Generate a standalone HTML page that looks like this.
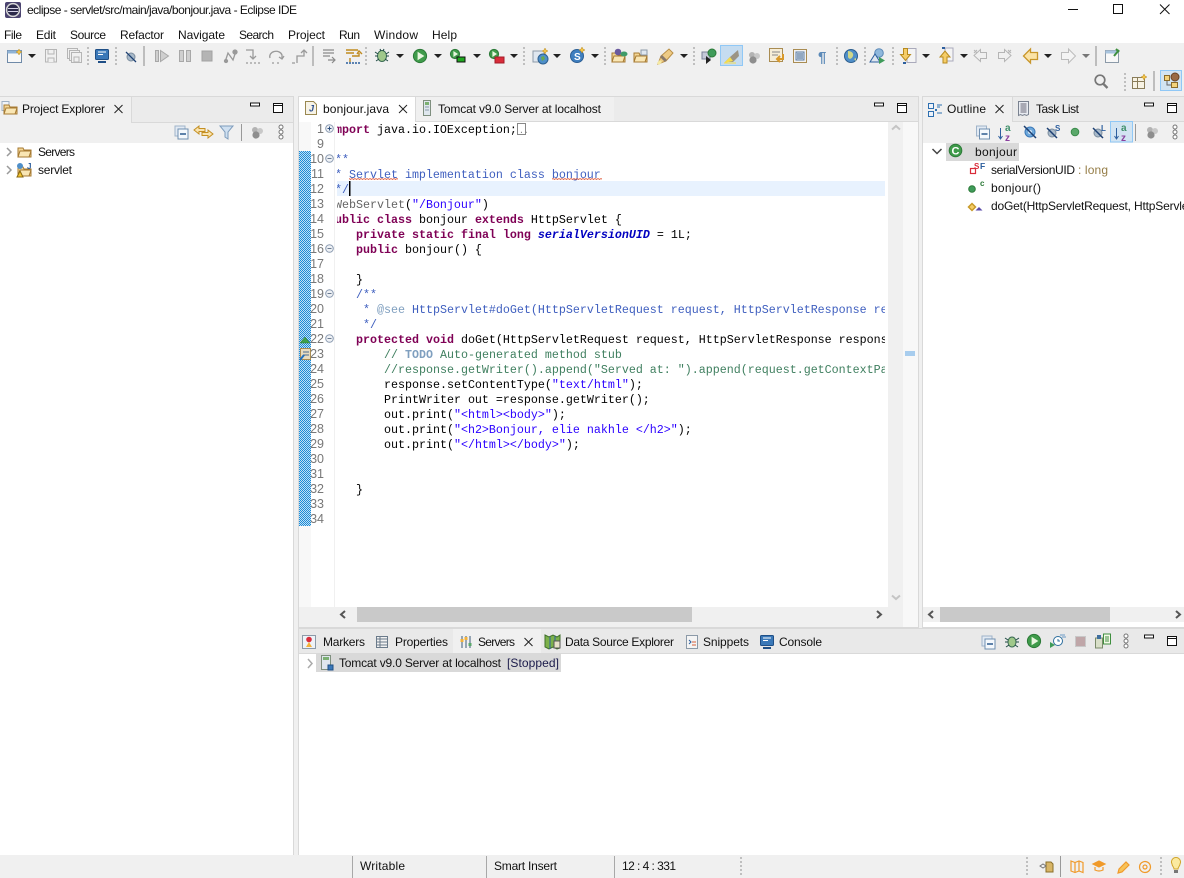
<!DOCTYPE html>
<html><head><meta charset="utf-8"><title>eclipse - servlet/src/main/java/bonjour.java - Eclipse IDE</title>
<style>
html,body{margin:0;padding:0;background:#fff;width:1184px;height:878px;overflow:hidden}
svg{display:block;position:absolute;left:0;top:0}
text{font-family:"Liberation Sans",sans-serif;font-size:12px;fill:#111;white-space:pre}
.c text,text.c{font-family:"Liberation Mono",monospace;font-size:11.67px;fill:#000}
.n{font-family:"Liberation Sans",sans-serif;font-size:12.5px;fill:#787878;text-anchor:end}
.k{fill:#7f0055;font-weight:bold}.j{fill:#3f5fbf}.s{fill:#2a00ff}.g{fill:#3f7f5f}.a{fill:#646464}.f{fill:#0000c0;font-weight:bold;font-style:italic}.t{fill:#7f9fbf;font-weight:bold}.d{fill:#7f9fbf}
</style></head><body>
<svg width="1184" height="878" viewBox="0 0 1184 878" xmlns="http://www.w3.org/2000/svg">
<defs>
<pattern id="dith" width="2" height="2" patternUnits="userSpaceOnUse"><rect width="2" height="2" fill="#bfe0f5"/><rect width="1" height="1" fill="#1b8ad6"/><rect x="1" y="1" width="1" height="1" fill="#1b8ad6"/></pattern>
<pattern id="wave" x="349" y="178" width="3" height="2" patternUnits="userSpaceOnUse"><path d="M0 .5L1.500 1.500 3 .5" stroke="#e05a3c" fill="none" stroke-width=".9"/></pattern>
<clipPath id="cc"><rect x="337" y="121" width="548" height="486"/></clipPath>
<clipPath id="oc"><rect x="923" y="143" width="261" height="464"/></clipPath>
<g id="dd"><path d="M-4-2H4L0 2Z" fill="#222"/></g>
<g id="ddg"><path d="M-4-2H4L0 2Z" fill="#777"/></g>
<g id="grip"><path d="M0-9V9" stroke="#aaa" stroke-width="1.4" stroke-dasharray="2 2"/></g>
<g id="sep"><path d="M0-10V10" stroke="#8a8a8a"/></g>
<g id="min"><rect x="-4.500" y="-2" width="9" height="3" fill="#fff" stroke="#111"/></g>
<g id="max"><path d="M-4.500-4.500h9v9h-9zM-4.500-2.500h9" fill="#fff" stroke="#111"/></g>
<g id="x"><path d="M-4-4L4 4M4-4L-4 4" stroke="#222" stroke-width="1" fill="none"/></g>
<g id="coll"><rect x="-6.500" y="-6.500" width="10" height="10" fill="#e2eaf3" stroke="#9fb3c9"/><rect x="-3.500" y="-3.500" width="10" height="10" fill="#f4f8fc" stroke="#6f8fb0"/><path d="M-1.500 1.500h6" stroke="#1e4e86" stroke-width="1.4"/></g>
<g id="gears"><circle cx="-2" cy="-2" r="3" fill="#b3b3b3"/><circle cx="3" cy="-1" r="3" fill="#c8c8c8"/><circle cx="-1" cy="3" r="3.600" fill="#8e8e8e"/></g>
<g id="menu"><circle cx="0" cy="-5" r="2" fill="#fff" stroke="#777"/><circle cx="0" cy="0" r="2" fill="#fff" stroke="#777"/><circle cx="0" cy="5" r="2" fill="#fff" stroke="#777"/></g>
<g id="folder"><path d="M-7-4h5l1 2h7v7h-13z" fill="#f4d796" stroke="#a67a32"/><path d="M-7 5l2-6h11l-2 6z" fill="#f9e6b4" stroke="#a67a32"/></g>
<g id="play"><circle r="6.600" fill="#3f9b4a" stroke="#2c7a38"/><path d="M-2.400-4.200L4.400 0-2.400 4.200Z" fill="#e8f6df"/></g>
<g id="playS"><circle r="4.600" fill="#3f9b4a" stroke="#2c7a38"/><path d="M-1.600-3L3 0-1.600 3Z" fill="#e8f6df"/></g>
</defs>

<!-- backgrounds -->
<rect y="43" width="1184" height="53" fill="#f0f0f0"/>
<rect y="855" width="1184" height="23" fill="#f0f0f0"/>
<rect y="854" width="1184" height="1" fill="#dcdcdc"/>
<rect y="96" width="1184" height="759" fill="#f0f0f0"/>

<!-- left panel -->
<rect x="0" y="96" width="294" height="759" fill="#fff"/>
<rect x="0" y="96" width="294" height="47" fill="#f0f0f0"/>
<rect x="131" y="97" width="162" height="25" fill="#ebebeb"/>
<path d="M0 96.500H293.500V855M131.500 97V122M131 122.500H293" stroke="#d9d9d9" fill="none"/>

<!-- editor panel -->
<rect x="298" y="96" width="621" height="532" fill="#f0f0f0"/>
<rect x="299" y="97" width="620" height="24" fill="#ebebeb"/>
<rect x="299" y="97" width="116" height="25" fill="#fff"/>
<rect x="415" y="97" width="199" height="24" fill="#f0f0f0"/>
<path d="M298.500 97V627.500H918.500V97M298 96.500H919M415.500 97V121M415 121.500H918" stroke="#d9d9d9" fill="none"/>
<rect x="299" y="122" width="589" height="485" fill="#fff"/>
<rect x="299" y="122" width="12" height="485" fill="#f8f8f8"/>
<path d="M334.500 122V607" stroke="#f0f0f0"/>
<rect x="299" y="151" width="12" height="375" fill="url(#dith)"/>
<rect x="337" y="181" width="548" height="15" fill="#e8f2fe"/>
<rect x="888" y="122" width="15" height="485" fill="#f0f0f0"/>
<rect x="903" y="122" width="15" height="505" fill="#f8f8f8"/>
<rect x="905" y="351" width="10" height="5" fill="#a8cdee"/>
<path d="M892 129.500l4-3.500 4 3.500" stroke="#c4c4c4" stroke-width="2" fill="none"/>
<path d="M892 595.500l4 3.500 4-3.500" stroke="#c4c4c4" stroke-width="2" fill="none"/>
<rect x="335" y="607" width="568" height="15" fill="#f0f0f0"/>
<rect x="357" y="607" width="335" height="15" fill="#c9c9c9"/>
<path d="M345 611l-4 3.500 4 3.500M877 611l4 3.500-4 3.500" stroke="#555" stroke-width="2" fill="none"/>

<!-- outline panel -->
<rect x="922" y="96" width="262" height="531" fill="#fff"/>
<rect x="922" y="96" width="262" height="47" fill="#f0f0f0"/>
<rect x="1013" y="97" width="171" height="24" fill="#ebebeb"/>
<path d="M922.500 627.500V96.500H1184M1012.500 97V121M1012 121.500H1184M922 627.500H1184" stroke="#d9d9d9" fill="none"/>
<rect x="923" y="607" width="261" height="15" fill="#f0f0f0"/>
<rect x="940" y="607" width="170" height="15" fill="#c9c9c9"/>
<path d="M933 611l-4 3.500 4 3.500M1176 611l4 3.500-4 3.500" stroke="#555" stroke-width="2" fill="none"/>

<!-- bottom panel -->
<rect x="298" y="628" width="886" height="227" fill="#fff"/>
<rect x="299" y="629" width="885" height="25" fill="#e9e9e9"/>
<rect x="453" y="629" width="88" height="25" fill="#f0f0f0"/>
<path d="M298.500 855V628.500H1184M299 653.500H1184" stroke="#d9d9d9" fill="none"/>
<rect x="316" y="654" width="245" height="18" fill="#d9d9d9"/>

<!-- title bar -->
<rect x="5" y="2" width="16" height="16" rx="2" fill="#4b4470"/>
<circle cx="13" cy="10" r="6.400" fill="#2c2a4a" stroke="#d8d8d8" stroke-width="1.500"/>
<path d="M8 8.500h10M8 11.500h10" stroke="#d6d3e8" stroke-width="1"/>
<text x="27" y="14" textLength="270" lengthAdjust="spacing">eclipse - servlet/src/main/java/bonjour.java - Eclipse IDE</text>
<path d="M1068 9.500H1078" stroke="#111"/>
<rect x="1113.500" y="4.500" width="9" height="9" fill="none" stroke="#111"/>
<path d="M1160 4.500l9.500 9.500M1169.500 4.500l-9.500 9.500" stroke="#111" fill="none"/>

<!-- menu -->
<text x="4" y="39" textLength="18">File</text>
<text x="36" y="39" textLength="20">Edit</text>
<text x="70" y="39" textLength="36">Source</text>
<text x="120" y="39" textLength="44">Refactor</text>
<text x="178" y="39" textLength="47">Navigate</text>
<text x="239" y="39" textLength="35">Search</text>
<text x="288" y="39" textLength="37">Project</text>
<text x="339" y="39" textLength="21">Run</text>
<text x="374" y="39" textLength="44">Window</text>
<text x="432" y="39" textLength="25">Help</text>

<!-- toolbar -->
<g>
<g transform="translate(15,57)"><rect x="-7.500" y="-6.500" width="14" height="12" fill="#f8f8f8" stroke="#6f8aa8"/><rect x="-7.500" y="-6.500" width="14" height="3" fill="#8fb3d6"/><path d="M4-8l1 2 2 1-2 1-1 2-1-2-2-1 2-1z" fill="#f3c34a" stroke="#b78a1e" stroke-width=".5"/></g>
<use href="#dd" x="32" y="56"/>
<g fill="#f0f0f0" stroke="#b5b5b5"><path d="M45.500 49.500h11v12.500h-11z"/><path d="M48 50v4h6v-4M48 62v-4h6v4"/>
<path d="M67.500 48.500h10v10h-10z"/><path d="M69.500 50.500h10v10h-10z"/><path d="M71.500 52.500h10v10h-10z"/><path d="M74 57h5v5h-5z"/></g>
<use href="#grip" x="88" y="56"/>
<g transform="translate(102,56)"><rect x="-6.500" y="-6.500" width="13" height="10" rx="1" fill="#3a78b8" stroke="#1f4f86"/><path d="M-4-4h8M-4-1.500h5" stroke="#fff"/><path d="M-4 6h8" stroke="#1f4f86" stroke-width="2"/></g>
<use href="#grip" x="116" y="56"/>
<g transform="translate(131,57)"><circle r="4" fill="#a8b9c9" stroke="#7c8d9e"/><path d="M-5-5L5 5" stroke="#1c3f72" stroke-width="1.300"/></g>
<use href="#sep" x="144" y="56"/>
<g fill="#cfcfcf" stroke="#a8a8a8"><path d="M155.500 50.500h3v11h-3z"/><path d="M160.500 50.500l8 5.500-8 5.500z"/><path d="M179.500 50.500h4v11h-4zM186.500 50.500h4v11h-4z"/></g>
<rect x="202" y="51" width="10" height="10" fill="#b4b4b4" stroke="#a2a2a2"/>
<g fill="none" stroke="#9a9a9a" stroke-width="1.300"><path d="M225 62l3-9 5 7 3-9"/><circle cx="226" cy="61" r="1.500" fill="#999"/><circle cx="235" cy="52" r="2" fill="#999"/>
<path d="M246 50h7v8M250 56l3 3 3-3M246 63h2M250 63h2M254 63h2M258 63h2"/>
<path d="M270 58a6 5 0 0 1 12-3l0 3M279 57l3 2 2-3M272 63h2M277 63h2"/>
<path d="M292 63h3M297 63v-7h7v-5M301 53l3-3 3 3"/></g>
<use href="#sep" x="313" y="56"/>
<g fill="none" stroke="#8a8a8a" stroke-width="1.200"><path d="M323 50h11M323 53h11M323 56h7M328 60h7M332 57l3 3-3 3"/></g>
<g fill="none" stroke="#c08a1e" stroke-width="1.400"><path d="M346 50h12M346 53h8M352 56h7v-3M357 54l2-3 3 3M350 58v4"/><path d="M346 63h14" stroke="#2a5f9e" stroke-dasharray="2 1"/></g>
<use href="#grip" x="366" y="56"/>
<g transform="translate(382,56)"><ellipse rx="4.500" ry="5.500" fill="#9fc88a" stroke="#3a6b54"/><path d="M-7-4l3 2M7-4l-3 2M-7 0h3M7 0h-3M-6 5l3-2M6 5l-3-2M-2-7l1 2M2-7l-1 2" stroke="#1f4a44" fill="none"/></g>
<use href="#dd" x="400" y="56"/>
<use href="#play" x="420" y="56"/><use href="#dd" x="438" y="56"/>
<use href="#playS" x="455" y="54"/><rect x="457" y="57" width="8" height="5" fill="#1fa81f" stroke="#111"/><use href="#dd" x="477" y="56"/>
<use href="#playS" x="494" y="54"/><rect x="495" y="57" width="9" height="6" fill="#d92c3a" stroke="#a31c28"/><use href="#dd" x="514" y="56"/>
<use href="#grip" x="524" y="56"/>
<g transform="translate(541,57)"><rect x="-8" y="-6" width="11" height="11" fill="#dfe7f0" stroke="#8c9aa8"/><circle cx="2" cy="2" r="5" fill="#4e8fc9" stroke="#2d5f8f"/><path d="M0 0l3-1 1 3-3 2z" fill="#6aa84f"/><path d="M4-9l1 2 2 1-2 1-1 2-1-2-2-1 2-1z" fill="#f3c34a" stroke="#b78a1e" stroke-width=".5"/></g>
<use href="#dd" x="557" y="56"/>
<g transform="translate(577,56)"><circle r="6.500" fill="#3f7fc0" stroke="#2c5f95"/><text x="-3" y="4" style="font-size:10px;font-weight:bold;fill:#fff">S</text><path d="M5-9l1 2 2 1-2 1-1 2-1-2-2-1 2-1z" fill="#f3c34a" stroke="#b78a1e" stroke-width=".5"/></g>
<use href="#dd" x="595" y="56"/>
<use href="#grip" x="605" y="56"/>
<use href="#folder" x="619" y="57"/><circle cx="618" cy="52" r="3.300" fill="#6a5a9e"/><ellipse cx="624" cy="54" rx="3.500" ry="2.500" fill="#3f9b6a"/>
<use href="#folder" x="641" y="57"/><rect x="641" y="50" width="6" height="5" fill="#dfe7f0" stroke="#8c9aa8"/>
<g transform="translate(665,57)"><path d="M-7 7l3-8 8-7 4 4-7 8z" fill="#eecb85" stroke="#b98f46"/><path d="M-4-1l5 5" stroke="#8a7a6a" stroke-width="3"/><path d="M-7 7l3-3" stroke="#f5e9a0" stroke-width="3"/></g>
<use href="#dd" x="684" y="56"/>
<use href="#grip" x="694" y="56"/>
<g transform="translate(708,56)"><rect x="-6" y="-4" width="8" height="7" fill="#c4c8d8" stroke="#7a7f98"/><circle cx="4" cy="-3" r="4" fill="#3f9b5a" stroke="#2c7a38"/><path d="M-2 0v8l5-4z" fill="#222"/></g>
<rect x="720.500" y="45.500" width="22" height="20" fill="#c5dcf0" stroke="#90c8f6"/>
<path d="M725 62l5-5 8-7 1 6-6 6z" fill="#9b9484"/><path d="M724 63l6-6 3 4z" fill="#f4dc4e"/><path d="M724 63h12" stroke="#f4dc4e"/>
<use href="#gears" x="754" y="57"/>
<g transform="translate(777,56)"><rect x="-7.500" y="-7.500" width="13" height="13" fill="#f6edd8" stroke="#a98c52"/><path d="M-5-4h8M-5-1h6" stroke="#888"/><path d="M6-2v5h-6M3 0l-3 3 3 3" stroke="#d9992a" stroke-width="2" fill="none"/></g>
<g transform="translate(800,56)"><rect x="-6.500" y="-6.500" width="13" height="13" fill="#f2f2f2" stroke="#a98c52"/><rect x="-4" y="-4" width="8" height="8" fill="#dbe6f2" stroke="#5c7ca0"/><path d="M-3-2h6M-3 0h6M-3 2h6" stroke="#4a6a90"/></g>
<text x="818" y="62" style="font-size:15px;font-weight:bold;fill:#5c8ab8">¶</text>
<use href="#grip" x="837" y="56"/>
<g transform="translate(851,56)"><circle r="6.500" fill="#4f8fc9" stroke="#2d5f8f"/><path d="M-3-5c3 0 6 2 5 5s-4 4-5 1zM3 3l2-1 0 3z" fill="#cfd78a"/></g>
<use href="#grip" x="865" y="56"/>
<g transform="translate(877,56)"><circle cx="2" cy="-3" r="4.300" fill="#8fb8dc" stroke="#5c8ab8"/><path d="M-7 6l5-8 5 8z" fill="#dfe7f0" stroke="#2d5f9e"/><path d="M2 1v7l6-3.500z" fill="#3f9b5a"/></g>
<use href="#grip" x="893" y="56"/>
<g transform="translate(908,56)"><rect x="-1" y="-7.500" width="9" height="14" fill="#f4f4f4" stroke="#aab"/><path d="M-4.500-7.500h4v6h3l-5 6-5-6h3z" fill="#f5cd68" stroke="#b78a1e"/><path d="M-5 7h3" stroke="#2d5f9e" stroke-width="2"/></g>
<use href="#dd" x="926" y="56"/>
<g transform="translate(945,56)"><rect x="0" y="-8" width="8" height="13" fill="#f4f4f4" stroke="#aab"/><path d="M-2 7h4v-6h3l-5-6-5 6h3z" fill="#f5cd68" stroke="#b78a1e"/><path d="M-3-8h3" stroke="#2d5f9e" stroke-width="2"/></g>
<use href="#dd" x="964" y="56"/>
<path d="M986.500 52.500h-6v-3l-6.500 6 6.500 6v-3h6z" fill="#f0f0f0" stroke="#b5b5b5"/><path d="M974 50l3 3M977 50l-3 3" stroke="#b5b5b5"/>
<path d="M998.500 52.500h6v-3l6.500 6-6.500 6v-3h-6z" fill="#f0f0f0" stroke="#b5b5b5"/><path d="M1008 50l3 3M1011 50l-3 3" stroke="#b5b5b5"/>
<path d="M1037.500 52.500h-7v-3.500l-7 7 7 7v-3.500h7z" fill="#fbe3a6" stroke="#c8962a" stroke-width="1.300"/>
<use href="#dd" x="1048" y="56"/>
<path d="M1061.500 52.500h7v-3.500l7 7-7 7v-3.500h-7z" fill="#f4f4f4" stroke="#bcbcbc"/>
<use href="#ddg" x="1086" y="56"/>
<use href="#sep" x="1096" y="56"/>
<g transform="translate(1112,57)"><rect x="-6.500" y="-6.500" width="13" height="12" fill="#f8f8f8" stroke="#8c9aa8"/><rect x="-6.500" y="-6.500" width="13" height="3" fill="#a8c4de"/><path d="M2-1l5-6M4-8l3 3" stroke="#3f8f3f" stroke-width="2"/></g>
</g>
<!-- toolbar row 2 -->
<circle cx="1100" cy="80" r="4.800" fill="none" stroke="#777" stroke-width="1.700"/><path d="M1103.500 84l4 4" stroke="#777" stroke-width="2.300"/>
<use href="#grip" x="1125" y="82"/>
<g transform="translate(1139,83)"><rect x="-6.500" y="-5.500" width="12" height="11" fill="#f8f3e4" stroke="#8a7d5a"/><path d="M-6-1.500h11M-1.500-5v10" stroke="#8a7d5a"/><path d="M5-9l1 2 2 1-2 1-1 2-1-2-2-1 2-1z" fill="#f3c34a" stroke="#b78a1e" stroke-width=".5"/></g>
<use href="#sep" x="1154" y="81"/>
<rect x="1160.500" y="70.500" width="21" height="20" fill="#d2e4f2" stroke="#90c8f6"/>
<g transform="translate(1171,81)"><path d="M-4-2v6h4" stroke="#666" fill="none"/><rect x="-6.500" y="-5.500" width="5" height="5" fill="#f3d27a" stroke="#8a6a2a"/><rect x="0.500" y="1.500" width="6" height="5" fill="#f3d27a" stroke="#8a6a2a"/><ellipse cx="4" cy="-4" rx="4" ry="4" fill="#9a6a44" stroke="#6a4424"/></g>

<!-- project explorer -->
<g transform="translate(9,108)"><rect x="-7" y="-6.500" width="7" height="9" fill="#f0f4f9" stroke="#9fb0c2"/><use href="#folder" x="2" y="1"/></g>
<text x="22" y="113" textLength="83">Project Explorer</text>
<use href="#x" x="118.500" y="109"/>
<use href="#min" x="255" y="105"/><use href="#max" x="278" y="108"/>
<use href="#coll" x="181.500" y="132.500"/>
<g fill="#f9e3ae" stroke="#c48f22"><path d="M205 128.500h-6v-2.500l-5 4 5 4v-2.500h6z"/><path d="M202 132.500h6v-2.500l5 4-5 4v-2.500h-6z"/></g>
<path d="M220 126h13l-5 6v7l-3-2v-5z" fill="#cfe0f1" stroke="#7e9cbc"/>
<path d="M241.500 124V141" stroke="#999"/>
<use href="#gears" x="257" y="132"/><use href="#menu" x="281" y="132"/>
<path d="M7 148l4 4-4 4M7 166l4 4-4 4" stroke="#9a9a9a" stroke-width="1.500" fill="none"/>
<use href="#folder" x="25" y="152"/>
<text x="38" y="156" textLength="37">Servers</text>
<g transform="translate(25,170)"><use href="#folder" x="0" y="1"/><circle cx="-5" cy="-4" r="3" fill="#4f8fc9"/><path d="M-5 1l3 6h-6z" fill="#f4c430" stroke="#8a6a10"/><text x="2" y="-1" style="font-size:8px;fill:#2d5f9e;font-weight:bold">J</text></g>
<text x="38" y="174" textLength="34">servlet</text>

<!-- editor tabs -->
<g transform="translate(311,108)"><path d="M-5.500-6.500h8l3 3v10h-11z" fill="#f7f3e7" stroke="#9a8850"/><text x="-2" y="3.500" style="font-size:9px;font-style:italic;font-weight:bold;fill:#2d4f8e">J</text></g>
<text x="323" y="113" textLength="66">bonjour.java</text>
<use href="#x" x="403" y="109"/>
<g transform="translate(427,108)"><rect x="-3.500" y="-7.500" width="7" height="15" fill="#dfe7ee" stroke="#7f8f7f"/><rect x="-2" y="-6" width="4" height="3" fill="#7bb072"/><path d="M-2-1h4M-2 2h4" stroke="#8a9aaa"/></g>
<text x="438" y="113" textLength="163">Tomcat v9.0 Server at localhost</text>
<use href="#min" x="879" y="105"/><use href="#max" x="902" y="108"/>

<!-- ruler -->
<g class="nums">
<text class="n" x="324" y="133">1</text><text class="n" x="324" y="148">9</text><text class="n" x="324" y="163">10</text><text class="n" x="324" y="178">11</text><text class="n" x="324" y="193">12</text><text class="n" x="324" y="208">13</text><text class="n" x="324" y="223">14</text><text class="n" x="324" y="238">15</text><text class="n" x="324" y="253">16</text><text class="n" x="324" y="268">17</text><text class="n" x="324" y="283">18</text><text class="n" x="324" y="298">19</text><text class="n" x="324" y="313">20</text><text class="n" x="324" y="328">21</text><text class="n" x="324" y="343">22</text><text class="n" x="324" y="358">23</text><text class="n" x="324" y="373">24</text><text class="n" x="324" y="388">25</text><text class="n" x="324" y="403">26</text><text class="n" x="324" y="418">27</text><text class="n" x="324" y="433">28</text><text class="n" x="324" y="448">29</text><text class="n" x="324" y="463">30</text><text class="n" x="324" y="478">31</text><text class="n" x="324" y="493">32</text><text class="n" x="324" y="508">33</text><text class="n" x="324" y="523">34</text>
</g>
<g fill="#eef1f5" stroke="#8a9ab0"><circle cx="329.500" cy="128.500" r="3.800"/><circle cx="329.500" cy="158.500" r="3.800"/><circle cx="329.500" cy="248.500" r="3.800"/><circle cx="329.500" cy="293.500" r="3.800"/><circle cx="329.500" cy="338.500" r="3.800"/></g>
<path d="M327.500 128.500h4M329.500 126.500v4" stroke="#2d4f7e"/>
<path d="M327.500 158.500h4M327.500 248.500h4M327.500 293.500h4M327.500 338.500h4" stroke="#6a7a90"/>
<path d="M300 343l5-6 5 6z" fill="#3fa04a" stroke="#2c7a38" stroke-width=".5"/>
<rect x="300.500" y="348.500" width="10" height="11" fill="#e8dcc0" stroke="#a98c52"/><path d="M303 352h6M303 355h6" stroke="#4a6a90"/><path d="M300 360l4-5" stroke="#1f6fc0" stroke-width="2"/>

<!-- code -->
<g class="c" clip-path="url(#cc)">
<text x="328" y="133"><tspan class="k">import</tspan> java.io.IOException;</text>
<rect x="517.500" y="123.500" width="8" height="11" fill="none" stroke="#888"/><text x="519" y="133" style="font-size:8px;fill:#777">..</text>
<text x="328" y="163"><tspan class="j">/**</tspan></text>
<text x="328" y="178"><tspan class="j"> * Servlet implementation class bonjour</tspan></text>
<text x="328" y="193"><tspan class="j"> */</tspan></text>
<text x="328" y="208"><tspan class="a">@WebServlet</tspan>(<tspan class="s">"/Bonjour"</tspan>)</text>
<text x="328" y="223"><tspan class="k">public</tspan> <tspan class="k">class</tspan> bonjour <tspan class="k">extends</tspan> HttpServlet {</text>
<text x="356" y="238"><tspan class="k">private</tspan> <tspan class="k">static</tspan> <tspan class="k">final</tspan> <tspan class="k">long</tspan> <tspan class="f">serialVersionUID</tspan> = 1L;</text>
<text x="356" y="253"><tspan class="k">public</tspan> bonjour() {</text>
<text x="356" y="283">}</text>
<text x="356" y="298"><tspan class="j">/**</tspan></text>
<text x="356" y="313"><tspan class="j"> * </tspan><tspan class="d">@see</tspan><tspan class="j"> HttpServlet#doGet(HttpServletRequest request, HttpServletResponse response)</tspan></text>
<text x="356" y="328"><tspan class="j"> */</tspan></text>
<text x="356" y="343"><tspan class="k">protected</tspan> <tspan class="k">void</tspan> doGet(HttpServletRequest request, HttpServletResponse response) {</text>
<text x="384" y="358"><tspan class="g">// </tspan><tspan class="t">TODO</tspan><tspan class="g"> Auto-generated method stub</tspan></text>
<text x="384" y="373"><tspan class="g">//response.getWriter().append("Served at: ").append(request.getContextPath());</tspan></text>
<text x="384" y="388">response.setContentType(<tspan class="s">"text/html"</tspan>);</text>
<text x="384" y="403">PrintWriter out =response.getWriter();</text>
<text x="384" y="418">out.print(<tspan class="s">"&lt;html&gt;&lt;body&gt;"</tspan>);</text>
<text x="384" y="433">out.print(<tspan class="s">"&lt;h2&gt;Bonjour, elie nakhle &lt;/h2&gt;"</tspan>);</text>
<text x="384" y="448">out.print(<tspan class="s">"&lt;/html&gt;&lt;/body&gt;"</tspan>);</text>
<text x="356" y="493">}</text>
</g>
<rect x="349" y="178" width="49" height="2" fill="url(#wave)"/>
<rect x="552" y="178" width="50" height="2" fill="url(#wave)"/>
<rect x="349" y="181" width="1.500" height="15" fill="#000"/>

<!-- outline -->
<g fill="#eef3fa" stroke="#2d6fb0"><rect x="928.500" y="103.500" width="5" height="5"/><rect x="928.500" y="111.500" width="5" height="5"/></g>
<path d="M937 105h5M937 107h3M937 113h5" stroke="#2d6fb0"/><rect x="935" y="109" width="2" height="2" fill="#2d6fb0"/>
<text x="947" y="113" textLength="39">Outline</text>
<use href="#x" x="999.500" y="109"/>
<g transform="translate(1024,109)"><path d="M-5.500-7.500h10v13l-2 1-2-1-2 1-2-1-2 1z" fill="#e9ecf2" stroke="#7a8290"/><path d="M-3.500-5h6M-3.500-3h6M-3.500-1h6M-3.500 1h6M-3.500 3h6" stroke="#667"/></g>
<text x="1036" y="113" textLength="43">Task List</text>
<use href="#min" x="1149" y="105"/><use href="#max" x="1172" y="108"/>
<use href="#coll" x="983" y="132.500"/>
<g><path d="M1000.500 128v10M998.500 136l2 3 2-3" stroke="#2d5f9e" fill="none"/><text x="1005" y="131" style="font-size:10px;font-weight:bold;fill:#3f8f6a">a</text><text x="1005" y="141" style="font-size:10px;font-weight:bold;fill:#8a3f9e">z</text></g>
<g transform="translate(1030,132)"><circle r="5" fill="#6fa9dc" stroke="#3a78b8"/><circle r="2" fill="#d6e8f7"/><path d="M-6-6L6 6" stroke="#1c3f72" stroke-width="1.500"/></g>
<g transform="translate(1052,133)"><circle r="4" fill="#a8b9c9" stroke="#7c8d9e"/><path d="M-5-5L5 5" stroke="#1c3f72" stroke-width="1.500"/><text x="3" y="-2" style="font-size:8px;font-weight:bold;fill:#2d5f9e">S</text></g>
<circle cx="1075" cy="132" r="3.800" fill="#5aa86a" stroke="#3a8a4a"/>
<g transform="translate(1098,133)"><circle r="4" fill="#a8b9c9" stroke="#7c8d9e"/><path d="M-5-5L5 5" stroke="#1c3f72" stroke-width="1.500"/><text x="3" y="-2" style="font-size:8px;font-weight:bold;fill:#2d5f9e">L</text></g>
<rect x="1110.500" y="121.500" width="22" height="20.500" fill="#d2e4f2" stroke="#90c8f6"/>
<g><path d="M1116.500 128v10M1114.500 136l2 3 2-3" stroke="#2d5f9e" fill="none"/><text x="1121" y="131" style="font-size:10px;font-weight:bold;fill:#3f8f6a">a</text><text x="1121" y="141" style="font-size:10px;font-weight:bold;fill:#8a3f9e">z</text></g>
<path d="M1135.500 124V141" stroke="#999"/>
<use href="#gears" x="1152" y="132"/><use href="#menu" x="1175" y="132"/>
<path d="M932.500 149l4.500 4.500 4.500-4.500" stroke="#444" stroke-width="1.500" fill="none"/>
<rect x="946" y="143" width="73" height="18" fill="#d9d9d9"/>
<circle cx="955.500" cy="150.500" r="6.300" fill="#3f9b4a" stroke="#2c7a38"/><text x="951.500" y="154.500" style="font-size:11px;font-weight:bold;fill:#fff">C</text>
<text x="975" y="156" textLength="42">bonjour</text>
<rect x="970.500" y="168.500" width="5" height="5" fill="#fff" stroke="#d92c3a" stroke-width="1.200"/>
<text x="974" y="169" style="font-size:8px;fill:#d92c3a;font-weight:bold">S</text><text x="980" y="169" style="font-size:8.500px;fill:#2d5f9e;font-weight:bold">F</text>
<g clip-path="url(#oc)">
<text x="991" y="174" textLength="84">serialVersionUID</text>
<text x="1078" y="174" textLength="30" style="fill:#957d47">: long</text>
<circle cx="972" cy="189" r="3.300" fill="#3f9b5a" stroke="#2c7a38"/>
<text x="980" y="186" style="font-size:8px;fill:#2c7a38;font-weight:bold">c</text>
<text x="991" y="192" textLength="50">bonjour()</text>
<path d="M972 203.500l3.500 3.500-3.500 3.500-3.500-3.500z" fill="#f5cd68" stroke="#c89a2a" stroke-width="1.500"/>
<path d="M979 207l3.500 3.500h-7z" fill="#5a4aa8"/>
<text x="991" y="210" style="letter-spacing:-.17px">doGet(HttpServletRequest, HttpServletResponse)  : void</text>
</g>

<!-- bottom tabs -->
<g transform="translate(309,642)"><rect x="-6.500" y="-6.500" width="13" height="13" fill="#eef2f7" stroke="#8c9aa8"/><circle cy="-2.500" r="2.800" fill="#d92c3a"/><path d="M-3 5l3-5 3 5z" fill="#f3b23a"/></g>
<text x="323" y="646" textLength="42">Markers</text>
<g transform="translate(382,642)"><rect x="-5.500" y="-5.500" width="11" height="11" fill="#f2f2f2" stroke="#6a7a8a"/><path d="M-5-3h10M-5 0h10M-5 3h10M-2-5v10" stroke="#6a7a8a"/></g>
<text x="395" y="646" textLength="53">Properties</text>
<g transform="translate(466,642)"><path d="M-4-6v12M0-6v12M4-6v12" stroke="#3a5a78"/><rect x="-5.500" y="-3" width="3" height="3" fill="#f3b23a"/><rect x="-1.500" y="-5" width="3" height="3" fill="#f3b23a"/><rect x="2.500" y="1" width="3" height="3" fill="#5aa86a"/></g>
<text x="478" y="646" textLength="37">Servers</text>
<use href="#x" x="528.500" y="642"/>
<g transform="translate(553,642)"><path d="M-8-7l4 2 4-2 4 2 3-2v13l-3 1-4-2-4 2-4-2z" fill="#7cb14a" stroke="#3f6f2a"/><path d="M-3-5v12M2-6v12" stroke="#2d5f9e"/><rect x="1" y="-1" width="6" height="7" fill="#e7e2c8" stroke="#555"/></g>
<text x="565" y="646" textLength="109">Data Source Explorer</text>
<g transform="translate(692,642)"><rect x="-5.500" y="-6.500" width="11" height="13" fill="#f4f4f4" stroke="#8c9aa8"/><path d="M-3-2l2 2-2 2" stroke="#2d5f9e" fill="none"/><path d="M0 0h4M0 3h4" stroke="#d9603a"/></g>
<text x="703" y="646" textLength="46">Snippets</text>
<g transform="translate(767,642)"><rect x="-6.500" y="-6.500" width="13" height="10" rx="1" fill="#3a78b8" stroke="#1f4f86"/><path d="M-4-4h8M-4-1.500h5" stroke="#fff"/><path d="M-4 6h8" stroke="#1f4f86" stroke-width="2"/></g>
<text x="779" y="646" textLength="43">Console</text>
<use href="#coll" x="988.500" y="642.500"/>
<g transform="translate(1012,642)"><ellipse rx="4" ry="5" fill="#9fc88a" stroke="#3a6b54"/><path d="M-7-4l3 2M7-4l-3 2M-7 0h3M7 0h-3M-6 5l3-2M6 5l-3-2" stroke="#1f4a44" fill="none"/></g>
<use href="#play" x="1034" y="641"/>
<g transform="translate(1057,641)"><circle cy="0" cx="1" r="4.500" fill="#fff" stroke="#2d6f9e"/><path d="M1-2v2h2" stroke="#2d6f9e" fill="none"/><path d="M-7 7V1l5 3z" fill="#3f9b5a"/><path d="M3-6h5M5-4h4" stroke="#6a9ac8"/></g>
<rect x="1075.500" y="636.500" width="10" height="10" fill="#bfa6a8" stroke="#c8c8c8"/>
<g transform="translate(1103,641)"><rect x="-7.500" y="-3" width="7" height="10" fill="#d8dfc8" stroke="#7a8a6a"/><rect x="0.500" y="-7" width="7" height="10" fill="#f4fae8" stroke="#3f8f3f"/><path d="M2-4h4M2-2h4M2 0h4" stroke="#3f8f3f"/><rect x="-6" y="-6" width="4" height="4" fill="#3f6f9e"/></g>
<use href="#menu" x="1126" y="641"/>
<use href="#min" x="1149" y="637"/><use href="#max" x="1172" y="641"/>
<path d="M308 659l4 4.500-4 4.500" stroke="#aaa" stroke-width="1.500" fill="none"/>
<g transform="translate(326,663)"><rect x="-4.500" y="-7.500" width="9" height="14" fill="#dfe7ee" stroke="#7f8f7f"/><rect x="-3" y="-6" width="6" height="3" fill="#7bb072"/><rect x="2" y="2" width="5" height="5" fill="#3a78b8" stroke="#1f4f86"/></g>
<text x="339" y="667" textLength="162">Tomcat v9.0 Server at localhost</text>
<text x="507" y="667" textLength="52" style="fill:#1a1a4a">[Stopped]</text>

<!-- status -->
<path d="M352.500 856V878M486.500 856V878M614.500 856V878" stroke="#a8a8a8"/>
<text x="360" y="870" textLength="45">Writable</text>
<text x="494" y="870" textLength="63">Smart Insert</text>
<text x="622" y="870" textLength="54">12 : 4 : 331</text>
<use href="#grip" x="741" y="866"/><use href="#grip" x="1027" y="866"/>
<g transform="translate(1047,867)"><path d="M-1-5h5l2 2v8h-7z" fill="#d8b566" stroke="#8a6f2a"/><path d="M-7-1l3-2 3 2-3 2z" fill="#f4f4f4" stroke="#777"/></g>
<path d="M1060.500 856V877" stroke="#999"/>
<g fill="none" stroke="#f09a2a" stroke-width="1.200">
<path d="M1071 861l4 1.500 4-1.500 4 1.500v10l-4-1.500-4 1.500-4-1.500z"/><path d="M1075 862v10M1079 861v10"/>
<path d="M1105 864l-6-3-6 3 6 3z" fill="#f09a2a"/><path d="M1095 867v3q4 2 8 0v-3"/>
<path d="M1118 873l1-4 7-7 3 3-7 7z" fill="#f7c35a"/>
<circle cx="1145" cy="867" r="5.500"/><circle cx="1145" cy="867" r="2"/>
</g>
<use href="#grip" x="1161" y="866"/>
<g transform="translate(1176,866)"><path d="M-4-2a4.500 4.500 0 1 1 8 0c0 2-2 3-2 5h-4c0-2-2-3-2-5z" fill="#fbeaa0" stroke="#d2a52a"/><rect x="-2" y="4" width="4" height="3" fill="#777"/></g>
</svg>
</body></html>
